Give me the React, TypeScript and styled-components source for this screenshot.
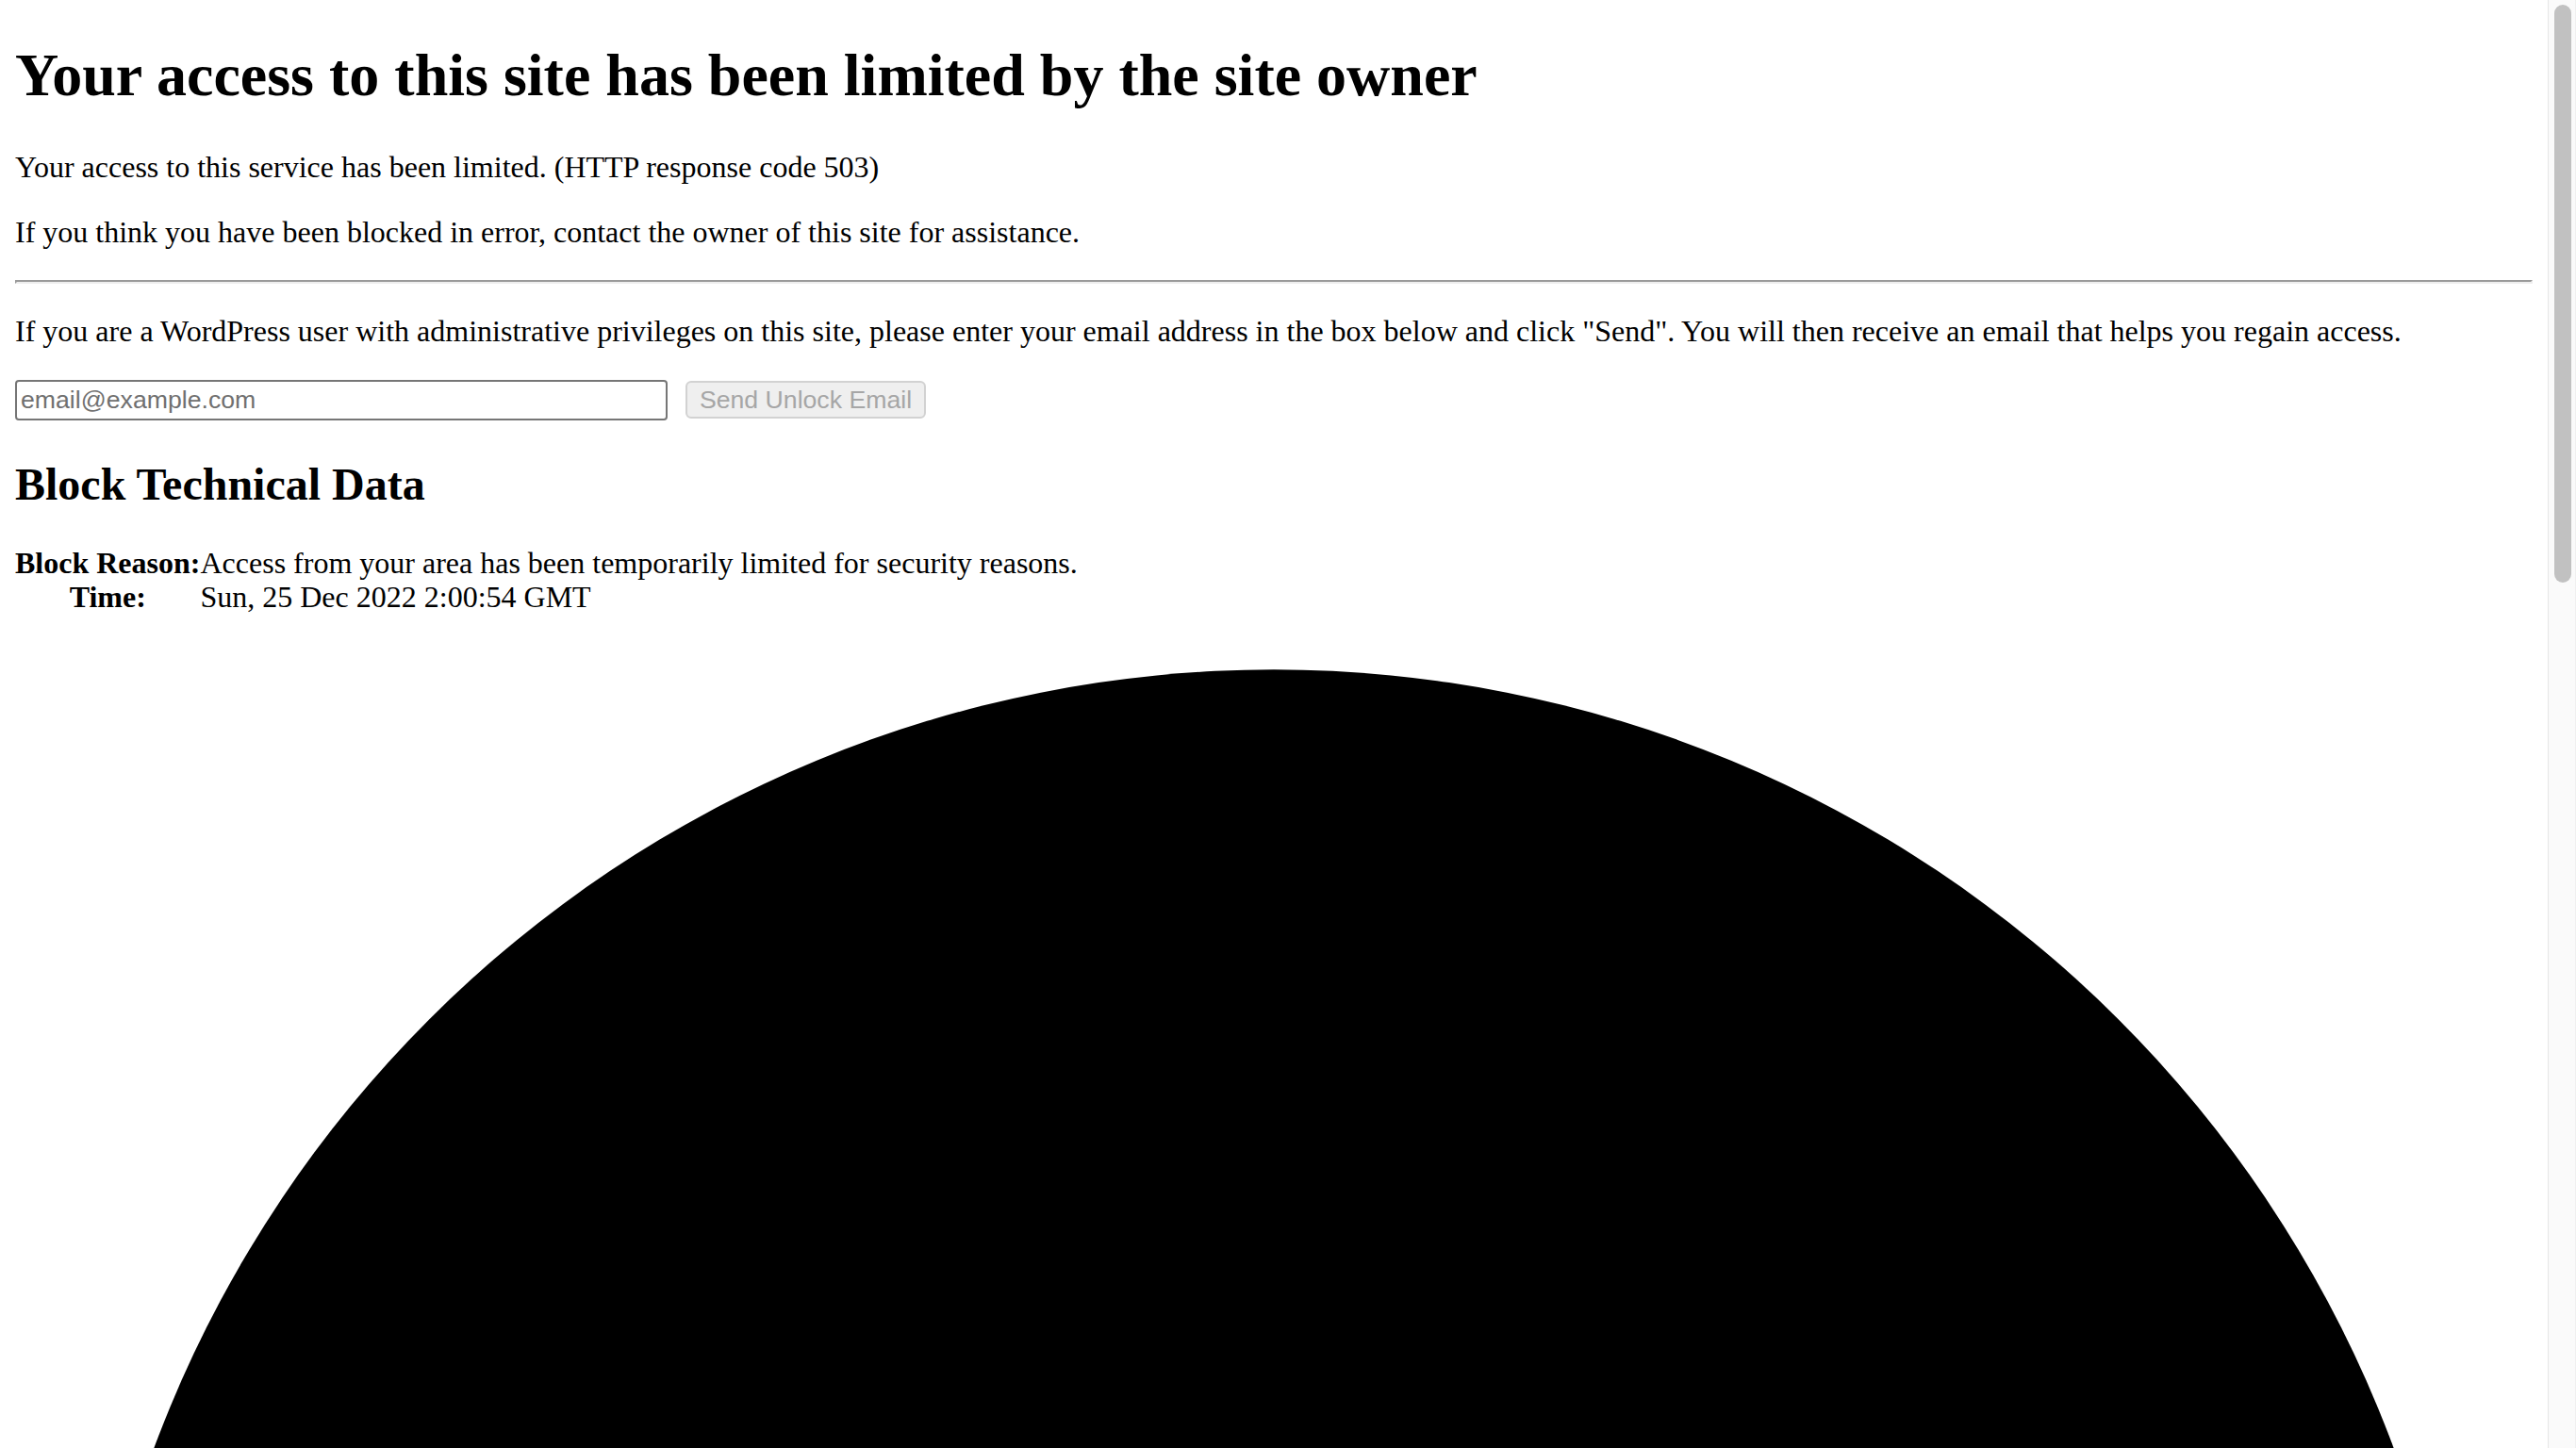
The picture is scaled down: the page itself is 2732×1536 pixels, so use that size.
import React from "react";
import styled, { createGlobalStyle } from "styled-components";

const GlobalStyle = createGlobalStyle`
  html, body {
    margin: 0;
    padding: 0;
    background: #ffffff;
    overflow: hidden;
  }
  body {
    font-family: "Liberation Serif", "Times New Roman", serif;
    color: #000000;
  }
`;

const Viewport = styled.div`
  display: flex;
  flex-direction: row;
  width: 100vw;
  height: 100vh;
  overflow: hidden;
`;

const Page = styled.main`
  flex: 1;
  min-width: 0;
  overflow: hidden;
  padding: 0 16px;
  font-size: 32px;
  line-height: 36.8px;
`;

const Title = styled.h1`
  margin: 42.88px 0;
  font-size: 64px;
  line-height: 73.6px;
  font-weight: bold;
`;

const Paragraph = styled.p`
  margin: 32px 0;
`;

const Rule = styled.hr`
  margin: 32px 0;
  height: 0;
  border-style: solid;
  border-width: 2px;
  border-color: #9a9a9a #eeeeee #eeeeee #9a9a9a;
`;

const UnlockForm = styled.form`
  display: flex;
  align-items: center;
  gap: 19px;
  margin: 0;
  padding-top: 1px;
`;

const EmailInput = styled.input`
  box-sizing: border-box;
  width: 692px;
  height: 43px;
  margin: 0;
  padding: 2px 4px;
  border: 2px solid #767676;
  border-radius: 4px;
  font-family: "Liberation Sans", Arial, sans-serif;
  font-size: 26.67px;
  color: #000000;
  background: #ffffff;
  &::placeholder {
    color: #707070;
  }
`;

const SendButton = styled.button`
  box-sizing: border-box;
  width: 255px;
  height: 40px;
  margin: 0;
  padding: 0 12px;
  border: 2px solid #d2d2d2;
  border-radius: 6px;
  background: #efefef;
  color: #a6a6a6;
  font-family: "Liberation Sans", Arial, sans-serif;
  font-size: 26.67px;
  line-height: 30px;
  white-space: nowrap;
`;

const SectionTitle = styled.h2`
  margin: 40px 0 37.6px;
  font-size: 48px;
  line-height: 55.2px;
  font-weight: bold;
`;

const DataTable = styled.table`
  border-collapse: collapse;
  border-spacing: 0;
  margin: 0;
  font-size: 32px;
  line-height: 36.8px;
`;

const HeadCell = styled.th`
  padding: 0;
  font-weight: bold;
  text-align: center;
  vertical-align: middle;
  white-space: nowrap;
`;

const ValueCell = styled.td`
  padding: 0;
  text-align: left;
  vertical-align: middle;
`;

const Logo = styled.svg`
  display: block;
  width: 100%;
  height: 1000px;
`;

const ScrollTrack = styled.div`
  flex: 0 0 30px;
  box-sizing: border-box;
  height: 100vh;
  background: #fafafa;
  border-left: 1px solid #e6e6e6;
  border-right: 1px solid #f0f0f0;
  padding: 5px 3px 0 6px;
`;

const ScrollThumb = styled.div`
  width: 18px;
  height: 613px;
  border-radius: 9px;
  background: #c1c1c1;
`;

export default function App() {
  return (
    <>
      <GlobalStyle />
      <Viewport>
        <Page>
          <Title>Your access to this site has been limited by the site owner</Title>
          <Paragraph>
            Your access to this service has been limited. (HTTP response code 503)
          </Paragraph>
          <Paragraph>
            If you think you have been blocked in error, contact the owner of this site for
            assistance.
          </Paragraph>
          <Rule />
          <Paragraph>
            If you are a WordPress user with administrative privileges on this site, please enter
            your email address in the box below and click "Send". You will then receive an email
            that helps you regain access.
          </Paragraph>
          <UnlockForm onSubmit={(e) => e.preventDefault()}>
            <EmailInput type="email" placeholder="email@example.com" />
            <SendButton type="submit" disabled>
              Send Unlock Email
            </SendButton>
          </UnlockForm>
          <SectionTitle>Block Technical Data</SectionTitle>
          <DataTable>
            <tbody>
              <tr>
                <HeadCell>Block Reason:</HeadCell>
                <ValueCell>
                  Access from your area has been temporarily limited for security reasons.
                </ValueCell>
              </tr>
              <tr>
                <HeadCell>Time:</HeadCell>
                <ValueCell>Sun, 25 Dec 2022 2:00:54 GMT</ValueCell>
              </tr>
            </tbody>
          </DataTable>
          <Logo viewBox="0 0 2670 1000" preserveAspectRatio="xMidYMin meet">
            <circle cx="1335" cy="1325.3" r="1267" fill="#000000" />
          </Logo>
        </Page>
        <ScrollTrack>
          <ScrollThumb />
        </ScrollTrack>
      </Viewport>
    </>
  );
}
